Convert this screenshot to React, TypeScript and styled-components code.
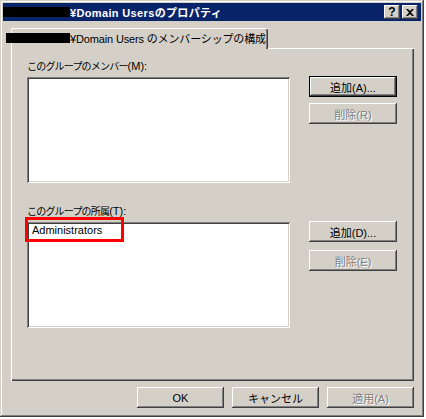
import React from 'react'
import styled, { createGlobalStyle } from 'styled-components'

const GlobalStyle = createGlobalStyle`
  html, body {
    margin: 0;
    padding: 0;
    background: #ffffff;
  }
  body {
    font-family: "Liberation Sans", "Noto Sans CJK JP", sans-serif;
    font-size: 11px;
    color: #000000;
  }
`

const raised = `
  box-shadow: inset -1px -1px #404040, inset 1px 1px #ffffff,
    inset -2px -2px #808080, inset 2px 2px #d4d0c8;
`

const Window = styled.div`
  width: 424px;
  height: 417px;
  box-sizing: border-box;
  padding: 3px;
  background: #d4d0c8;
  box-shadow: inset -1px -1px #404040, inset 1px 1px #d4d0c8,
    inset -2px -2px #808080, inset 2px 2px #ffffff;
  display: flex;
  flex-direction: column;
`

const TitleBar = styled.div`
  height: 18px;
  background: #0a246a;
  display: flex;
  align-items: center;
  padding-right: 3px;
`

const Redact = styled.span<{ $w: number }>`
  display: inline-block;
  width: ${({ $w }) => $w}px;
  height: 10px;
  background: #000000;
  vertical-align: middle;
`

const TitleText = styled.div`
  flex: 1;
  display: flex;
  align-items: center;
  color: #ffffff;
  font-weight: bold;
  font-size: 11px;
  letter-spacing: 0.35px;
  white-space: nowrap;
`

const CaptionButtons = styled.div`
  display: flex;
  gap: 2px;
`

const CaptionButton = styled.div`
  width: 16px;
  height: 14px;
  background: #d4d0c8;
  ${raised}
  display: flex;
  align-items: center;
  justify-content: center;
  font-weight: bold;
  font-size: 12px;
  line-height: 14px;
`

const TabStrip = styled.div`
  display: flex;
  margin-top: 7px;
  padding-left: 8px;
  margin-bottom: -1px;
  position: relative;
  z-index: 1;
`

const Tab = styled.div`
  width: 257px;
  height: 21px;
  box-sizing: border-box;
  background: #d4d0c8;
  border-top: 1px solid #ffffff;
  border-left: 1px solid #ffffff;
  border-top-left-radius: 2px;
  border-top-right-radius: 2px;
  box-shadow: inset -1px 0 #404040, inset -2px 0 #808080;
  display: flex;
  align-items: center;
  white-space: nowrap;
  padding-bottom: 2px;
  font-size: 11px;
  letter-spacing: -0.15px;
`

const TabRedact = styled(Redact)`
  margin-left: -6px;
`

const Panel = styled.div`
  margin: 0 7px 0 8px;
  height: 333px;
  box-sizing: border-box;
  border-left: 1px solid #ffffff;
  border-top: 1px solid #ffffff;
  box-shadow: inset -1px -1px #404040, inset -2px -2px #808080;
  padding: 11px 0 0 15px;
  display: flex;
  flex-direction: column;
  gap: 22px;
`

const Group = styled.div`
  display: flex;
  flex-direction: column;
`

const Label = styled.div`
  height: 13px;
  line-height: 13px;
  margin-bottom: 4px;
  font-size: 11px;
  white-space: nowrap;
`

const Kana = styled.span`
  font-size: 10px;
  letter-spacing: -0.8px;
`

const Row = styled.div`
  display: flex;
  gap: 19px;
  align-items: flex-start;
`

const ListBox = styled.div`
  position: relative;
  width: 263px;
  height: 106px;
  box-sizing: border-box;
  background: #ffffff;
  box-shadow: inset 1px 1px #808080, inset -1px -1px #ffffff,
    inset 2px 2px #404040, inset -2px -2px #d4d0c8;
  padding: 2px 2px 2px 5px;
`

const Item = styled.div`
  height: 13px;
  line-height: 13px;
  font-size: 11px;
`

const Highlight = styled.div`
  position: absolute;
  left: -2px;
  top: -5px;
  width: 99px;
  height: 25px;
  box-sizing: border-box;
  border: 3px solid #ff0000;
`

const ButtonColumn = styled.div<{ $gap: number }>`
  display: flex;
  flex-direction: column;
  gap: ${({ $gap }) => $gap}px;
  margin-top: -1px;
`

const Button = styled.div<{ $default?: boolean; $disabled?: boolean; $w?: number }>`
  width: ${({ $w }) => $w ?? 88}px;
  height: 21px;
  box-sizing: border-box;
  background: #d4d0c8;
  display: flex;
  align-items: center;
  justify-content: center;
  font-size: 11px;
  white-space: nowrap;
  border: ${({ $default }) => ($default ? '1px solid #000000' : 'none')};
  ${raised}
  color: ${({ $disabled }) => ($disabled ? '#808080' : '#000000')};
  text-shadow: ${({ $disabled }) => ($disabled ? '1px 1px #ffffff' : 'none')};
`

const Footer = styled.div`
  display: flex;
  justify-content: flex-end;
  gap: 8px;
  padding: 6px 7px 0 0;
`

const CloseIcon = () => (
  <svg width="8" height="7" viewBox="0 0 8 7">
    <path d="M0 0h2l2 2 2-2h2L5 3.5 8 7H6L4 5 2 7H0l3-3.5z" fill="#000" />
  </svg>
)

export default function App() {
  return (
    <>
      <GlobalStyle />
      <Window>
        <TitleBar>
          <TitleText>
            <Redact $w={67} />
            ¥Domain Usersのプロパティ
          </TitleText>
          <CaptionButtons>
            <CaptionButton>?</CaptionButton>
            <CaptionButton>
              <CloseIcon />
            </CaptionButton>
          </CaptionButtons>
        </TitleBar>
        <TabStrip>
          <Tab>
            <TabRedact $w={64} />
            ¥Domain Users のメンバーシップの構成
          </Tab>
        </TabStrip>
        <Panel>
          <Group>
            <Label>
              <Kana>このグループのメンバー</Kana>(M):
            </Label>
            <Row>
              <ListBox />
              <ButtonColumn $gap={6}>
                <Button $default>追加(A)...</Button>
                <Button $disabled>削除(R)</Button>
              </ButtonColumn>
            </Row>
          </Group>
          <Group>
            <Label>
              <Kana>このグループの所属</Kana>(T):
            </Label>
            <Row>
              <ListBox>
                <Item>Administrators</Item>
                <Highlight />
              </ListBox>
              <ButtonColumn $gap={8}>
                <Button>追加(D)...</Button>
                <Button $disabled>削除(E)</Button>
              </ButtonColumn>
            </Row>
          </Group>
        </Panel>
        <Footer>
          <Button $w={87}>OK</Button>
          <Button $w={87}>キャンセル</Button>
          <Button $w={87} $disabled>
            適用(A)
          </Button>
        </Footer>
      </Window>
    </>
  )
}
